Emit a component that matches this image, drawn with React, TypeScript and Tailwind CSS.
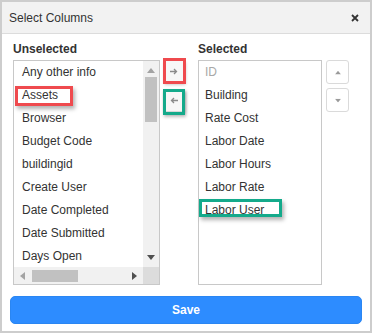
const UNSELECTED = [
  'Any other info',
  'Assets',
  'Browser',
  'Budget Code',
  'buildingid',
  'Create User',
  'Date Completed',
  'Date Submitted',
  'Days Open',
];

const SELECTED = ['ID', 'Building', 'Rate Cost', 'Labor Date', 'Labor Hours', 'Labor Rate', 'Labor User'];

function Tri({ dir, className }: { dir: 'up' | 'down' | 'left' | 'right'; className?: string }) {
  const pts = {
    up: '0,5 4,0 8,5',
    down: '0,0 8,0 4,5',
    left: '5,0 5,8 0,4',
    right: '0,0 0,8 5,4',
  }[dir];
  const horiz = dir === 'left' || dir === 'right';
  return (
    <svg width={horiz ? 5 : 8} height={horiz ? 8 : 5} viewBox={horiz ? '0 0 5 8' : '0 0 8 5'} className={className}>
      <polygon points={pts} fill="currentColor" />
    </svg>
  );
}

function Arrow({ left }: { left?: boolean }) {
  return (
    <svg width="8" height="7" viewBox="0 0 8 7" className={left ? 'rotate-180' : ''}>
      <path d="M0 3.5H6.5M4 1L6.5 3.5L4 6" stroke="#8a8a8a" strokeWidth="1.3" fill="none" />
    </svg>
  );
}

export default function App() {
  return (
    <div className="flex h-[333px] w-[372px] flex-col border-2 border-[#cdcdcd] bg-white font-['Liberation_Sans',Arial,sans-serif] text-[#333]">
      <div className="flex h-[32px] shrink-0 items-center justify-between border-b border-[#dcdcdc] bg-[#f2f2f2] pl-[7px] pr-[11px]">
        <span className="text-[12px]">Select Columns</span>
        <svg width="8" height="8" viewBox="0 0 8 8">
          <path d="M1 1L7 7M7 1L1 7" stroke="#333" strokeWidth="1.8" />
        </svg>
      </div>

      <div className="flex flex-col px-[8px] pt-[7px]">
        <div className="flex pl-[3px]">
          <div className="flex w-[147px] flex-col">
            <div className="mb-[3px] h-[16px] text-[12px] font-bold leading-[16px]">Unselected</div>
            <div className="flex h-[225px] flex-col border border-[#c8c8c8]">
              <div className="flex min-h-0 flex-1">
                <div className="flex-1 overflow-hidden">
                  {UNSELECTED.map((t) => (
                    <div key={t} className="relative h-[23px] whitespace-nowrap pl-[8px] text-[12px] leading-[23px]">
                      {t}
                      {t === 'Assets' && (
                        <span className="absolute left-[1px] top-[2px] h-[20px] w-[58px] border-[3px] border-[#ef4a4e] shadow-[2px_3px_4px_rgba(0,0,0,0.3)]" />
                      )}
                    </div>
                  ))}
                </div>
                <div className="flex w-[16px] flex-col items-center bg-[#f1f1f1] text-[#a3a3a3]">
                  <Tri dir="up" className="mt-[7px]" />
                  <div className="mt-[4px] h-[45px] w-[12px] bg-[#c1c1c1]" />
                  <div className="flex-1" />
                  <Tri dir="down" className="mb-[7px] text-[#505050]" />
                </div>
              </div>
              <div className="flex h-[17px] shrink-0 bg-[#f1f1f1]">
                <div className="flex flex-1 items-center">
                  <Tri dir="left" className="ml-[6px] text-[#a3a3a3]" />
                  <div className="ml-[7px] h-[12px] w-[46px] bg-[#c1c1c1]" />
                  <div className="flex-1" />
                  <Tri dir="right" className="mr-[6px] text-[#505050]" />
                </div>
                <div className="w-[16px] bg-[#dcdcdc]" />
              </div>
            </div>
          </div>

          <div className="ml-[3px] flex w-[22px] flex-col gap-[6px] pt-[19px]">
            <div className="relative flex h-[23px] w-[22px] items-center justify-center rounded-[2px] border border-[#d8d8d8] bg-[#f7f7f7] shadow-[1px_2px_3px_rgba(0,0,0,0.2)]">
              <Arrow />
              <span className="absolute -left-[1px] -top-[3px] h-[26px] w-[23px] border-[3px] border-[#ef4a4e]" />
            </div>
            <div className="relative flex h-[23px] w-[22px] items-center justify-center rounded-[2px] border border-[#d8d8d8] bg-[#f7f7f7] shadow-[1px_2px_3px_rgba(0,0,0,0.2)]">
              <Arrow left />
              <span className="absolute -left-[1px] -top-[1px] h-[26px] w-[22px] border-[3px] border-[#14aa8b] shadow-[1px_2px_3px_rgba(0,0,0,0.25)]" />
            </div>
          </div>

          <div className="ml-[13px] flex w-[124px] flex-col">
            <div className="mb-[3px] h-[16px] text-[12px] font-bold leading-[16px]">Selected</div>
            <div className="h-[225px] border border-[#c8c8c8]">
              {SELECTED.map((t) => (
                <div
                  key={t}
                  className={`relative h-[23px] whitespace-nowrap pl-[6px] text-[12px] leading-[23px] ${t === 'ID' ? 'text-[#a8a8a8]' : ''}`}
                >
                  {t}
                  {t === 'Labor User' && (
                    <span className="absolute left-0 top-0 h-[18px] w-[83px] border-[3px] border-[#14aa8b] shadow-[2px_3px_4px_rgba(0,0,0,0.3)]" />
                  )}
                </div>
              ))}
            </div>
          </div>

          <div className="ml-[4px] flex w-[23px] flex-col gap-[4px] pt-[19px]">
            <div className="flex h-[24px] w-[23px] items-center justify-center rounded-[3px] border border-[#dadada] bg-white text-[#9a9a9a]">
              <Tri dir="up" className="scale-75" />
            </div>
            <div className="flex h-[24px] w-[23px] items-center justify-center rounded-[3px] border border-[#dadada] bg-white text-[#9a9a9a]">
              <Tri dir="down" className="scale-75" />
            </div>
          </div>
        </div>

        <button className="mt-[11px] h-[28px] w-full rounded-[5px] border border-[#2a86f2] bg-[#2d8cff] text-[12px] font-bold text-white">
          Save
        </button>
      </div>
    </div>
  );
}
